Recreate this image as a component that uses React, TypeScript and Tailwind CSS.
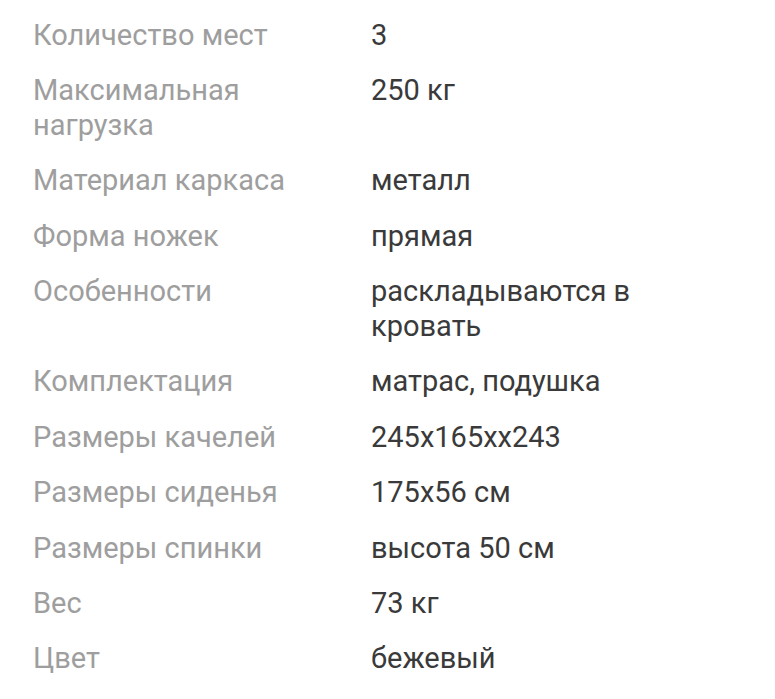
import React from "react";

const specs: [string, string][] = [
  ["Количество мест", "3"],
  ["Максимальная нагрузка", "250 кг"],
  ["Материал каркаса", "металл"],
  ["Форма ножек", "прямая"],
  ["Особенности", "раскладываются в кровать"],
  ["Комплектация", "матрас, подушка"],
  ["Размеры качелей", "245х165хх243"],
  ["Размеры сиденья", "175х56 см"],
  ["Размеры спинки", "высота 50 см"],
  ["Вес", "73 кг"],
  ["Цвет", "бежевый"],
];

const App = () => {
  return (
    <div className="min-h-screen bg-white pl-[33px] pt-[17.5px] font-['Roboto',sans-serif] text-[29px] leading-[35px]">
      <dl className="grid grid-cols-[338px_330px] gap-y-[20.4px]">
        {specs.map(([label, value]) => (
          <React.Fragment key={label}>
            <dt className="pr-[40px] text-[#9e9e9e]">{label}</dt>
            <dd className="text-[#3a3a3a]">{value}</dd>
          </React.Fragment>
        ))}
      </dl>
    </div>
  );
};

export default App;
